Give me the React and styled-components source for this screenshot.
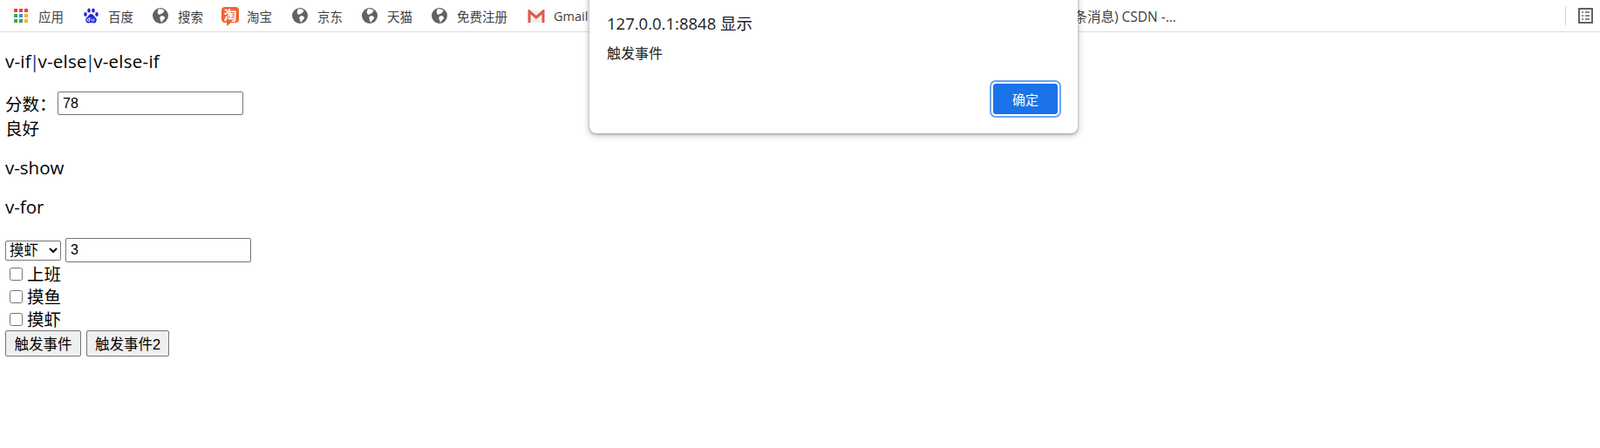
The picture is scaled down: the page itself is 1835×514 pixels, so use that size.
import React from 'react';
import styled, { createGlobalStyle } from 'styled-components';

const CJK = `"Noto Sans CJK SC", sans-serif`;
const UI = `"Open Sans", "Noto Sans CJK SC", sans-serif`;
const ARIAL = `"Liberation Sans", "Noto Sans CJK SC", sans-serif`;

const GlobalStyle = createGlobalStyle`
  html, body {
    margin: 0;
    padding: 0;
    background: #fff;
  }
`;

const GlobeIcon = () => (
  <svg width="18" height="18" viewBox="0 0 18 18">
    <circle cx="9" cy="9" r="9" fill="#5f6368" />
    <path d="M7 1.2c2.6-.2 5 .5 6.6 1.8L12 5.4c-.5 1.300-2.200 1-3 1.800-.9 1-2.300.3-3-.8C5.400 5 5.800 2.800 7 1.200z" fill="#fff" />
    <path d="M9.500 9.500c1.600-.5 3.500 0 4.300 1 .8 1.300-.3 2.700-1.500 3.500-1 .8-1.300 2.200-2.300 2.600-.9-1.200-.7-2.600-1.400-3.700-.6-1.200-.1-3 .9-3.400z" fill="#fff" />
  </svg>
);

const AppsIcon = () => (
  <svg width="16" height="16" viewBox="0 0 16 16">
    {[
      ['#ea4335', '#ea4335', '#ea4335'],
      ['#34a853', '#4285f4', '#fbbc05'],
      ['#34a853', '#34a853', '#fbbc05'],
    ].map((row, r) =>
      row.map((fill, c) => <rect key={`${r}-${c}`} x={c * 6} y={r * 6} width="4" height="4" fill={fill} />)
    )}
  </svg>
);

const BaiduIcon = () => (
  <svg width="17" height="18" viewBox="0 0 17 18">
    <g fill="#2529d8">
      <ellipse cx="2" cy="7.500" rx="1.800" ry="2.400" />
      <ellipse cx="6" cy="3" rx="1.800" ry="2.500" />
      <ellipse cx="11" cy="3" rx="1.800" ry="2.500" />
      <ellipse cx="15" cy="7.500" rx="1.800" ry="2.400" />
      <path d="M8.500 7c2 0 2.800 1.700 4 3 1.300 1.200 2.300 2.300 2.300 4 0 2.500-2 3.600-3.800 3.500-1.200 0-1.800-.4-2.500-.4s-1.300.4-2.500.4C4.200 17.600 2.200 16.500 2.200 14c0-1.700 1-2.800 2.300-4 1.200-1.300 2-3 4-3z" />
    </g>
    <path d="M6.800 11v4.200H5.300a1.300 1.300 0 0 1 0-2.700h1.500M9.200 12.500v1.800c0 1.300 2.500 1.300 2.500 0v-1.800" fill="none" stroke="#fff" strokeWidth="1" />
  </svg>
);

const GmailIcon = () => (
  <svg width="20" height="15" viewBox="0 0 20 15">
    <path d="M1 1h18v14H1z" fill="#f1efec" />
    <path d="M2 15V2l8 7 8-7v13" fill="none" stroke="#dd5a4e" strokeWidth="3" />
  </svg>
);

const ListIcon = () => (
  <svg width="17" height="18" viewBox="0 0 17 18">
    <rect x="1" y="1" width="15" height="16" fill="none" stroke="#5f6368" strokeWidth="2" />
    <path d="M4 5h2M8 5h5M4 9h2M8 9h5M4 13h2M8 13h5" stroke="#5f6368" strokeWidth="1.500" />
  </svg>
);

const BookmarkBar = styled.div`
  display: flex;
  align-items: center;
  height: 36px;
  padding-left: 16px;
  border-bottom: 1px solid #dadce0;
  box-sizing: content-box;
`;

const Bookmark = styled.div`
  display: flex;
  align-items: center;
  gap: ${(p) => p.$gap || 11}px;
  width: ${(p) => p.$width}px;
  flex-shrink: 0;
  font-family: ${UI};
  font-size: 14.500px;
  color: #3c4043;
  white-space: nowrap;

  svg {
    flex-shrink: 0;
  }
`;

const TaobaoBadge = styled.span`
  position: relative;
  display: flex;
  align-items: center;
  justify-content: center;
  width: 20px;
  height: 18px;
  margin-bottom: 3px;
  border-radius: 4px;
  background: #f2632c;
  color: #fff;
  font-family: ${CJK};
  font-size: 15px;
  font-weight: 700;
  line-height: 1;

  &::after {
    content: '';
    position: absolute;
    left: 6px;
    bottom: -4px;
    border-top: 4px solid #f2632c;
    border-right: 5px solid transparent;
  }
`;

const TabTitle = styled.div`
  flex-shrink: 0;
  margin-left: 553px;
  font-family: ${UI};
  font-size: 15.500px;
  color: #3c4043;
  white-space: nowrap;
`;

const BarEnd = styled.div`
  display: flex;
  align-items: center;
  gap: 14px;
  margin-left: auto;
  padding-right: 8px;
`;

const Divider = styled.span`
  width: 1px;
  height: 22px;
  background: #d5d6d8;
`;

const Content = styled.div`
  padding: 0 6px;
  font-family: ${UI};
  font-size: 19.500px;
  color: #000;
`;

const Heading = styled.p`
  margin: 0;
  height: 27px;
  line-height: 27px;
  padding-top: ${(p) => p.$top}px;
  font-size: 20.500px;
  letter-spacing: ${(p) => p.$spacing || 0}px;
  white-space: nowrap;
`;

const Pipe = styled.span`
  margin: 0 -2px;
  color: #00336e;
`;

const ScoreRow = styled.div`
  display: flex;
  align-items: center;
  height: 27px;
  margin-top: 21px;
`;

const Label = styled.span`
  width: 60px;
  font-family: ${CJK};
  line-height: 27px;
`;

const Result = styled.div`
  height: 26px;
  line-height: 26px;
  margin-top: 2px;
  font-family: ${CJK};
`;

const TextInput = styled.input`
  box-sizing: border-box;
  width: 213px;
  height: ${(p) => p.$height || 27}px;
  margin: 0;
  padding: 1px 5px;
  border: 1px solid #767676;
  border-radius: 2px;
  background: #fff;
  font-family: ${ARIAL};
  font-size: 16px;
  color: #000;
`;

const ControlRow = styled.div`
  display: flex;
  align-items: center;
  gap: 5px;
  height: 28px;
  margin-top: 22px;
`;

const Select = styled.select`
  box-sizing: border-box;
  width: 64px;
  height: 23px;
  margin: 0;
  padding: 0;
  border: 1px solid #767676;
  border-radius: 2px;
  background: #fff;
  font-family: ${ARIAL};
  font-size: 16.500px;
  color: #000;
`;

const CheckRow = styled.label`
  display: flex;
  align-items: center;
  gap: 5px;
  height: 26px;
  padding-left: 5px;
  font-family: ${CJK};
  line-height: 26px;
`;

const Check = styled.input.attrs({ type: 'checkbox' })`
  width: 15px;
  height: 15px;
  margin: 0;
`;

const ButtonRow = styled.div`
  display: flex;
  gap: 6px;
`;

const PlainButton = styled.button`
  box-sizing: border-box;
  width: ${(p) => p.$width}px;
  height: 30px;
  margin: 0;
  padding: 0;
  border: 1px solid #767676;
  border-radius: 2px;
  background: #efefef;
  font-family: ${ARIAL};
  font-size: 16.500px;
  color: #000;
`;

const Dialog = styled.div`
  position: absolute;
  top: -8px;
  left: 676px;
  box-sizing: border-box;
  width: 560px;
  height: 161px;
  padding: 23px 20px 0 20px;
  border-radius: 8px;
  background: #fff;
  box-shadow: 0 1px 3px rgba(60, 64, 67, 0.45), 0 2px 6px 2px rgba(60, 64, 67, 0.2);
`;

const DialogTitle = styled.div`
  font-family: ${UI};
  font-size: 18.500px;
  line-height: 24px;
  color: #202124;
`;

const DialogText = styled.div`
  margin-top: 11px;
  font-family: ${CJK};
  font-size: 16px;
  line-height: 20px;
  color: #202124;
`;

const DialogActions = styled.div`
  display: flex;
  justify-content: flex-end;
  margin-top: 23px;
`;

const ConfirmButton = styled.button`
  box-sizing: border-box;
  width: 74px;
  height: 35px;
  margin: 3px;
  padding: 0;
  border: 0;
  border-radius: 3px;
  background: #1a73e8;
  outline: 2px solid #fff;
  box-shadow: 0 0 0 4px #6ea4f2;
  font-family: ${CJK};
  font-size: 15px;
  color: #fff;
`;

const bookmarks = [
  { label: '应用', icon: <AppsIcon />, width: 80, gap: 12 },
  { label: '百度', icon: <BaiduIcon />, width: 79 },
  { label: '搜索', icon: <GlobeIcon />, width: 79 },
  { label: '淘宝', icon: <TaobaoBadge>淘</TaobaoBadge>, width: 81, gap: 9 },
  { label: '京东', icon: <GlobeIcon />, width: 80 },
  { label: '天猫', icon: <GlobeIcon />, width: 80 },
  { label: '免费注册', icon: <GlobeIcon />, width: 110 },
  { label: 'Gmail', icon: <GmailIcon />, width: 60, gap: 10 },
];

const App = () => (
  <>
    <GlobalStyle />
    <BookmarkBar>
      {bookmarks.map((b) => (
        <Bookmark key={b.label} $width={b.width} $gap={b.gap}>
          {b.icon}
          <span>{b.label}</span>
        </Bookmark>
      ))}
      <TabTitle>(4条消息) CSDN -...</TabTitle>
      <BarEnd>
        <Divider />
        <ListIcon />
      </BarEnd>
    </BookmarkBar>
    <Content>
      <Heading $top={20} $spacing={0.25}>
        v-if<Pipe>|</Pipe>v-else<Pipe>|</Pipe>v-else-if
      </Heading>
      <ScoreRow>
        <Label>分数：</Label>
        <TextInput defaultValue="78" />
      </ScoreRow>
      <Result>良好</Result>
      <Heading $top={19}>v-show</Heading>
      <Heading $top={18}>v-for</Heading>
      <ControlRow>
        <Select defaultValue="摸虾">
          <option>上班</option>
          <option>摸鱼</option>
          <option>摸虾</option>
        </Select>
        <TextInput defaultValue="3" $height={28} />
      </ControlRow>
      {['上班', '摸鱼', '摸虾'].map((t) => (
        <CheckRow key={t}>
          <Check />
          {t}
        </CheckRow>
      ))}
      <ButtonRow>
        <PlainButton $width={87}>触发事件</PlainButton>
        <PlainButton $width={95}>触发事件2</PlainButton>
      </ButtonRow>
    </Content>
    <Dialog>
      <DialogTitle>127.0.0.1:8848 显示</DialogTitle>
      <DialogText>触发事件</DialogText>
      <DialogActions>
        <ConfirmButton>确定</ConfirmButton>
      </DialogActions>
    </Dialog>
  </>
);

export default App;
